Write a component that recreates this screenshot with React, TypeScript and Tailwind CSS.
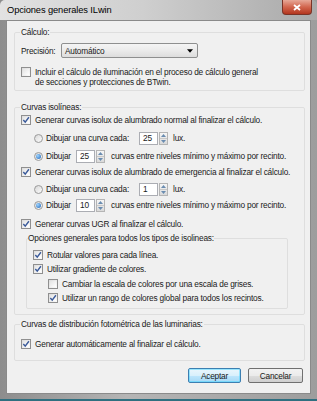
import React from "react";

const font = "font-['Liberation_Sans',Arial,sans-serif]";

function Check({ checked }: { checked?: boolean }) {
  return (
    <span className="relative inline-block w-[10px] h-[10px] shrink-0 border border-[#8f8f8f] bg-[linear-gradient(135deg,#dcdcdc,#fbfbfb)]">
      <span className="absolute inset-[1px] bg-[linear-gradient(135deg,#e4e4e4,#ffffff)]" />
      {checked && (
        <svg viewBox="0 0 8 8" className="absolute left-0 top-0 w-[8px] h-[8px]">
          <path d="M1.3 4.1 L3.2 6.1 L6.9 1.3" fill="none" stroke="#3a5a9a" strokeWidth="1.4" />
        </svg>
      )}
    </span>
  );
}

function Radio({ checked }: { checked?: boolean }) {
  return (
    <span className="relative inline-flex items-center justify-center w-[9px] h-[9px] shrink-0 rounded-full border border-[#9a9a9a] bg-[linear-gradient(135deg,#d8d8d8,#fcfcfc)]">
      {checked && <span className="w-[5px] h-[5px] rounded-full bg-[radial-gradient(circle_at_35%_35%,#9fd5ff,#1c63b8)]" />}
    </span>
  );
}

function Spin({ value, w }: { value: string; w: string }) {
  return (
    <span className="inline-flex h-[13px] items-stretch">
      <span className={`${w} h-[13px] border border-[#abadb3] bg-white pl-[3px] flex items-center`}>{value}</span>
      <span className="w-[9px] h-[13px] ml-[1px] flex flex-col border border-[#b5b5b5] bg-[linear-gradient(#f6f6f6,#dadada)]">
        <span className="flex-1 flex items-center justify-center border-b border-[#c8c8c8]">
          <svg viewBox="0 0 5 3" className="w-[5px] h-[3px]"><path d="M0 3 L2.5 0 L5 3Z" fill="#6a8cb0" /></svg>
        </span>
        <span className="flex-1 flex items-center justify-center">
          <svg viewBox="0 0 5 3" className="w-[5px] h-[3px]"><path d="M0 0 L2.5 3 L5 0Z" fill="#6a8cb0" /></svg>
        </span>
      </span>
    </span>
  );
}

export default function App() {
  return (
    <div className={`${font} text-[8.3px] tracking-[-0.2px] leading-[10px] text-[#1a1a1a] w-[317px] h-[401px] flex flex-col bg-[linear-gradient(to_right,#8d8d8d,#b5b5b5_40%,#9d9d9d)] border-b-2 border-[#2f6f80]`}>
      {/* title bar */}
      <div className="h-[20px] shrink-0 flex items-start justify-between pl-[7px] pr-[5px] bg-[linear-gradient(to_right,#e2e2e2,#cfcfcf_45%,#a9a9a9)] rounded-t-[5px]">
        <span className="mt-[5px] text-[9.3px] tracking-[-0.1px] leading-[11px] text-black">Opciones generales ILwin</span>
        <span className="w-[30px] h-[15px] flex items-center justify-center rounded-b-[4px] border border-t-0 border-[#7a3327] bg-[linear-gradient(#e7a898,#d2664e_50%,#b3361f)]">
          <svg viewBox="0 0 8 7" className="w-[8px] h-[7px]"><path d="M1 1 L7 6 M7 1 L1 6" stroke="#fff" strokeWidth="1.8" /></svg>
        </span>
      </div>
      {/* body */}
      <div className="flex-1 mx-[6px] mb-[5px] flex flex-col bg-[#f0f0f0] border border-[#8a8a8a] pl-[7px] pr-[5px]">
        {/* Cálculo */}
        <fieldset className="mt-[6px] border border-[#dedede] rounded-[2px] pb-[3px]">
          <legend className="ml-[5px] px-[1px] h-[10px]">Cálculo:</legend>
          <div className="mt-[6px] flex items-center h-[15px] pl-[6px]">
            <span className="w-[40px]">Precisión:</span>
            <span className="w-[137px] h-[15px] flex items-center justify-between rounded-[2px] border border-[#8e8f8f] bg-[linear-gradient(#f4f4f4,#ebebeb_50%,#dddddd)] pl-[3px] pr-[4px]">
              <span>Automático</span>
              <svg viewBox="0 0 5 3" className="w-[6px] h-[4px]"><path d="M0 0 L2.5 3 L5 0Z" fill="#000" /></svg>
            </span>
          </div>
          <div className="mt-[9px] flex items-start pl-[6px]">
            <Check />
            <span className="ml-[4px]">Incluir el cálculo de iluminación en el proceso de cálculo general<br />de secciones y protecciones de BTwin.</span>
          </div>
        </fieldset>

        {/* Curvas isolíneas */}
        <fieldset className="mt-[11px] border border-[#dedede] rounded-[2px] pb-[5px]">
          <legend className="ml-[5px] px-[1px] h-[10px]">Curvas isolíneas:</legend>
          <div className="mt-[1px] h-[14px] flex items-center pl-[6px]">
            <Check checked />
            <span className="ml-[4px]">Generar curvas isolux de alumbrado normal al finalizar el cálculo.</span>
          </div>
          <div className="mt-[4px] h-[14px] flex items-center pl-[19px]">
            <Radio />
            <span className="ml-[3px] w-[93px]">Dibujar una curva cada:</span>
            <Spin value="25" w="w-[19px]" />
            <span className="ml-[5px]">lux.</span>
          </div>
          <div className="mt-[4px] h-[14px] flex items-center pl-[19px]">
            <Radio checked />
            <span className="ml-[3px] w-[30px]">Dibujar</span>
            <Spin value="25" w="w-[19px]" />
            <span className="ml-[6px]">curvas entre niveles mínimo y máximo por recinto.</span>
          </div>
          <div className="mt-[2px] h-[14px] flex items-center pl-[6px]">
            <Check checked />
            <span className="ml-[4px]">Generar curvas isolux de alumbrado de emergencia al finalizar el cálculo.</span>
          </div>
          <div className="mt-[3px] h-[14px] flex items-center pl-[19px]">
            <Radio />
            <span className="ml-[3px] w-[93px]">Dibujar una curva cada:</span>
            <Spin value="1" w="w-[19px]" />
            <span className="ml-[5px]">lux.</span>
          </div>
          <div className="mt-[2px] h-[14px] flex items-center pl-[19px]">
            <Radio checked />
            <span className="ml-[3px] w-[30px]">Dibujar</span>
            <Spin value="10" w="w-[19px]" />
            <span className="ml-[6px]">curvas entre niveles mínimo y máximo por recinto.</span>
          </div>
          <div className="mt-[5px] h-[14px] flex items-center pl-[6px]">
            <Check checked />
            <span className="ml-[4px]">Generar curvas UGR al finalizar el cálculo.</span>
          </div>
          <fieldset className="mt-[2px] ml-[11px] mr-[16px] border border-[#dedede] rounded-[2px] pb-[3px]">
            <legend className="ml-[1px] h-[10px]">Opciones generales para todos los tipos de isolineas:</legend>
            <div className="mt-[5px] h-[14px] flex items-center pl-[6px]">
              <Check checked />
              <span className="ml-[4px]">Rotular valores para cada línea.</span>
            </div>
            <div className="h-[14px] flex items-center pl-[6px]">
              <Check checked />
              <span className="ml-[4px]">Utilizar gradiente de colores.</span>
            </div>
            <div className="mt-[1px] h-[14px] flex items-center pl-[21px]">
              <Check />
              <span className="ml-[4px]">Cambiar la escala de colores por una escala de grises.</span>
            </div>
            <div className="h-[14px] flex items-center pl-[21px]">
              <Check checked />
              <span className="ml-[4px]">Utilizar un rango de colores global para todos los recintos.</span>
            </div>
          </fieldset>
        </fieldset>

        {/* Curvas de distribución */}
        <fieldset className="mt-[4px] border border-[#dedede] rounded-[2px] pb-[9px]">
          <legend className="ml-[5px] px-[1px] h-[10px]">Curvas de distribución fotométrica de las luminarias:</legend>
          <div className="mt-[8px] h-[14px] flex items-center pl-[6px]">
            <Check checked />
            <span className="ml-[4px]">Generar automáticamente al finalizar el cálculo.</span>
          </div>
        </fieldset>

        {/* buttons */}
        <div className="mt-[7px] flex justify-end gap-[7px] pr-[2px]">
          <button className="w-[53px] h-[15px] rounded-[2px] border border-[#3c7fb1] bg-[linear-gradient(#eaf6fd,#d9f0fc_50%,#bee6fd_51%,#a7d9f5)] shadow-[inset_0_0_0_1px_#48d5ff80] leading-[10px]">Aceptar</button>
          <button className="w-[55px] h-[15px] rounded-[2px] border border-[#707070] bg-[linear-gradient(#f2f2f2,#ebebeb_50%,#dddddd_51%,#cfcfcf)] leading-[10px]">Cancelar</button>
        </div>
      </div>
    </div>
  );
}
